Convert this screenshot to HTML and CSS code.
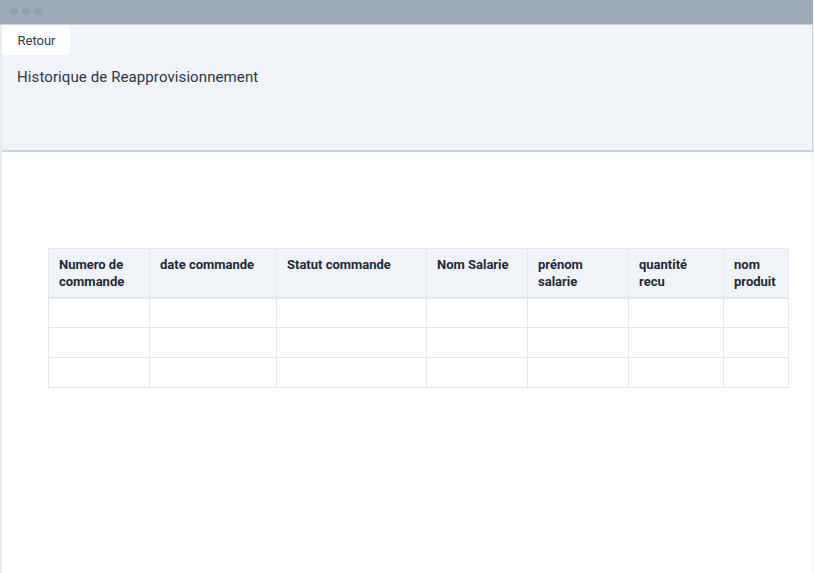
FILE: index.html
```html
<!DOCTYPE html>
<html lang="fr">
<head>
<meta charset="utf-8">
<title>Historique de Reapprovisionnement</title>
<link rel="stylesheet" href="styles.css">
</head>
<body>
<div class="window">
  <div class="titlebar">
    <span class="dot"></span><span class="dot"></span><span class="dot"></span>
  </div>
  <div class="content">
    <header class="panel">
      <button class="back">Retour</button>
      <h1 class="title">Historique de Reapprovisionnement</h1>
    </header>
    <main class="main">
      <table class="grid">
        <colgroup>
          <col class="c1"><col class="c2"><col class="c3"><col class="c4"><col class="c5"><col class="c6"><col class="c7">
        </colgroup>
        <thead>
          <tr>
            <th>Numero de commande</th>
            <th>date commande</th>
            <th>Statut commande</th>
            <th>Nom Salarie</th>
            <th>prénom salarie</th>
            <th>quantité recu</th>
            <th>nom produit</th>
          </tr>
        </thead>
        <tbody>
          <tr><td></td><td></td><td></td><td></td><td></td><td></td><td></td></tr>
          <tr><td></td><td></td><td></td><td></td><td></td><td></td><td></td></tr>
          <tr><td></td><td></td><td></td><td></td><td></td><td></td><td></td></tr>
        </tbody>
      </table>
    </main>
  </div>
</div>
</body>
</html>
```

FILE: styles.css
```css
* { box-sizing: border-box; }
html, body { margin: 0; padding: 0; }
body {
  width: 814px;
  height: 573px;
  overflow: hidden;
  font-family: Roboto, "Noto Sans", "Liberation Sans", sans-serif;
  color: #2d3748;
  background: #ffffff;
}
.window {
  height: 573px;
  display: flex;
  flex-direction: column;
  border-left: 2px solid #e8ecf1;
  border-right: 1px solid #eef1f4;
}
.titlebar {
  height: 25px;
  flex: none;
  background: #9dacba;
  border-bottom: 1px solid #c6cfd8;
  display: flex;
  align-items: center;
  gap: 4px;
  padding-left: 10px;
  padding-bottom: 2px;
  margin-left: -2px;
}
.dot {
  width: 8px;
  height: 8px;
  border-radius: 50%;
  background: #8f9fae;
}
.content {
  flex: 1;
  display: flex;
  flex-direction: column;
}
.panel {
  height: 127px;
  background: #f0f4f8;
  border-right: 1px solid #c9d3dd;
  border-bottom: 2px solid #cbd5df;
  display: flex;
  flex-direction: column;
  align-items: flex-start;
}
.back {
  font-family: inherit;
  font-size: 13px;
  color: #2d3748;
  background: #ffffff;
  border: none;
  border-radius: 0 0 4px 4px;
  height: 30px;
  width: 68px;
  padding: 0 0 0 1px;
  text-align: center;
  cursor: pointer;
}
.title {
  margin: 13px 0 0 15px;
  font-size: 15px;
  font-weight: 400;
  line-height: 18px;
  color: #2d3748;
  letter-spacing: 0.1px;
}
.main {
  flex: 1;
  padding: 96px 24px 0 46px;
}
.grid {
  border-collapse: collapse;
  width: 740px;
  table-layout: fixed;
}
.c1 { width: 101px; }
.c2 { width: 127px; }
.c3 { width: 150px; }
.c4 { width: 101px; }
.c5 { width: 101px; }
.c6 { width: 95px; }
.c7 { width: 65px; }
.grid th, .grid td {
  border: 1px solid #e2e8f0;
}
.grid th {
  background: #f0f4f8;
  font-size: 13px;
  font-weight: 700;
  line-height: 17px;
  text-align: left;
  vertical-align: top;
  padding: 7px 9px 6px 10px;
  height: 49px;
  color: #1f2937;
  border-bottom: 2px solid #e2e8f0;
}
.grid td {
  height: 30px;
}
```
